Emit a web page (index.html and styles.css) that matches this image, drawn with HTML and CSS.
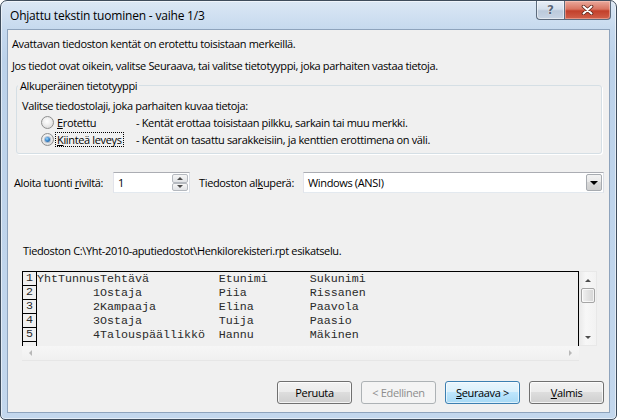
FILE: index.html
```html
<!DOCTYPE html>
<html lang="fi">
<head>
<meta charset="utf-8">
<title>Ohjattu tekstin tuominen - vaihe 1/3</title>
<link rel="stylesheet" href="styles.css">
</head>
<body>
<div class="window">
  <div class="titlebar">
    <span class="title">Ohjattu tekstin tuominen - vaihe 1/3</span>
    <div class="caption-btns">
      <div class="cap-btn help"><span class="help-glyph">?</span></div>
      <div class="cap-btn close">
        <svg width="13" height="10" viewBox="0 0 13 10">
          <path d="M2.5 1.5 L10.5 8.5 M10.5 1.5 L2.5 8.5" stroke="#5a2318" stroke-width="3.6" stroke-linecap="round" fill="none"/>
          <path d="M2.5 1.5 L10.5 8.5 M10.5 1.5 L2.5 8.5" stroke="#ffffff" stroke-width="2" stroke-linecap="round" fill="none"/>
        </svg>
      </div>
    </div>
  </div>
  <div class="client">
    <p class="line first">Avattavan tiedoston kentät on erotettu toisistaan merkeillä.</p>
    <p class="line second">Jos tiedot ovat oikein, valitse Seuraava, tai valitse tietotyyppi, joka parhaiten vastaa tietoja.</p>
    <fieldset class="group">
      <legend>Alkuperäinen tietotyyppi</legend>
      <div class="group-intro">Valitse tiedostolaji, joka parhaiten kuvaa tietoja:</div>
      <div class="options">
        <div class="opt"><span class="radio"></span><span class="opt-label"><u>E</u>rotettu</span></div>
        <div class="opt-desc">- Kentät erottaa toisistaan pilkku, sarkain tai muu merkki.</div>
        <div class="opt"><span class="radio checked"></span><span class="opt-label focus"><u>K</u>iinteä leveys</span></div>
        <div class="opt-desc">- Kentät on tasattu sarakkeisiin, ja kenttien erottimena on väli.</div>
      </div>
    </fieldset>
    <div class="import-row">
      <span class="lbl-start">Aloita tuonti <u>r</u>iviltä:</span>
      <div class="spinner">
        <span class="spin-val">1</span>
        <div class="spin-btns">
          <span class="spin-btn"><span class="tri-up"></span></span>
          <span class="spin-btn"><span class="tri-down"></span></span>
        </div>
      </div>
      <span class="lbl-origin">Tiedoston al<u>k</u>uperä:</span>
      <div class="combo">
        <span class="combo-val">Windows (ANSI)</span>
        <span class="combo-btn"><span class="tri-down dark"></span></span>
      </div>
    </div>
    <p class="preview-caption">Tiedoston C:\Yht-2010-aputiedostot\Henkilorekisteri.rpt esikatselu.</p>
    <div class="preview">
      <div class="preview-body">
        <div class="rownums">
          <div class="rn">1</div>
          <div class="rn">2</div>
          <div class="rn">3</div>
          <div class="rn">4</div>
          <div class="rn">5</div>
        </div>
        <div class="ptext">
          <div class="prow">YhtTunnusTehtävä          Etunimi      Sukunimi</div>
          <div class="prow">        1Ostaja           Piia         Rissanen</div>
          <div class="prow">        2Kampaaja         Elina        Paavola</div>
          <div class="prow">        3Ostaja           Tuija        Paasio</div>
          <div class="prow">        4Talouspäällikkö  Hannu        Mäkinen</div>
        </div>
      </div>
      <div class="vscroll">
        <span class="sb-arrow"><span class="tri-up"></span></span>
        <span class="thumb"></span>
        <span class="sb-fill"></span>
        <span class="sb-arrow"><span class="tri-down"></span></span>
      </div>
      <div class="hscroll">
        <span class="hsb-arrow"><span class="tri-left"></span></span>
        <span class="sb-fill"></span>
        <span class="hsb-arrow"><span class="tri-right"></span></span>
      </div>
      <div class="corner"></div>
    </div>
    <div class="buttons">
      <span class="btn">Peruuta</span>
      <span class="btn disabled">&lt; Edellinen</span>
      <span class="btn default"><u>S</u>euraava &gt;</span>
      <span class="btn"><u>V</u>almis</span>
    </div>
  </div>
</div>
</body>
</html>
```
FILE: styles.css
```css
* { box-sizing: border-box; }

body {
  margin: 0;
  font-family: "Open Sans", "Noto Sans", sans-serif;
  font-size: 11px;
  letter-spacing: -0.35px;
  color: #000;
  background: #ffffff;
}

.window {
  width: 617px;
  height: 420px;
  border: 1px solid #3e4c5c;
  border-radius: 7px 7px 5px 5px;
  background: linear-gradient(#dbe7f5 0px, #c6d9ee 28px, #bcd2ea 60px, #c3d7ed 100%);
  box-shadow: inset 0 0 0 1px rgba(255,255,255,0.55);
  display: flex;
  flex-direction: column;
  overflow: hidden;
}

.titlebar {
  height: 28px;
  display: flex;
  align-items: flex-start;
  flex: none;
}

.title {
  padding-left: 9px;
  line-height: 15px;
  margin-top: 7px;
  flex: 1;
  font-size: 12px;
  letter-spacing: -0.2px;
}

.caption-btns {
  display: flex;
  margin-right: 5px;
}

.cap-btn {
  height: 19px;
  display: flex;
  align-items: center;
  justify-content: center;
  border: 1px solid #5c6b7d;
  border-top: none;
}

.help {
  width: 28px;
  border-right: none;
  border-radius: 0 0 0 4px;
  background: linear-gradient(#e8eef6 0%, #d4dfec 45%, #bccadb 55%, #c8d5e4 100%);
  box-shadow: inset 0 0 0 1px rgba(255,255,255,0.5);
}

.help-glyph {
  font-family: "DejaVu Sans", sans-serif;
  font-weight: bold;
  font-size: 12px;
  letter-spacing: 0;
  color: #5a6778;
  text-shadow: 0 0 1px #fff, 0 0 1px #fff;
  line-height: 12px;
}

.close {
  width: 47px;
  border-radius: 0 0 4px 0;
  background: linear-gradient(#eaa99c 0%, #d97561 45%, #c2402b 55%, #d1604a 100%);
  box-shadow: inset 0 0 0 1px rgba(255,210,200,0.45);
}

.client {
  flex: 1;
  margin: 0 6px 6px 6px;
  border: 1px solid #8ea3bc;
  background: #f0f0f0;
  display: flex;
  flex-direction: column;
  padding-top: 6px;
}

.line {
  margin: 0 0 0 4px;
  line-height: 15px;
}

.line.second { margin-top: 7px; }

.group {
  margin: 5px 7px 0 8px;
  padding: 0 0 5px 0;
  border: 1px solid #d5dfe5;
  border-radius: 3px;
  box-shadow: 1px 1px 0 #ffffff;
  min-width: 0;
}

.group legend {
  padding: 0 2px;
  margin-left: 1px;
  line-height: 15px;
}

.group-intro {
  margin: 5px 0 0 5px;
  line-height: 15px;
}

.options {
  margin: 1px 0 0 24px;
  display: grid;
  grid-template-columns: 95px auto;
  grid-auto-rows: 17px;
  align-items: center;
}

.opt {
  display: flex;
  align-items: center;
}

.radio {
  width: 13px;
  height: 13px;
  border-radius: 50%;
  border: 1px solid #8e8f8f;
  background: radial-gradient(circle at 45% 40%, #ffffff 0%, #f1f1f1 35%, #d0d0d0 100%);
  position: relative;
  flex: none;
}

.radio.checked::after {
  content: "";
  position: absolute;
  left: 3px;
  top: 3px;
  width: 5px;
  height: 5px;
  border-radius: 50%;
  background: radial-gradient(circle at 40% 35%, #9fd8fb 0%, #3d8bd0 45%, #174d85 100%);
  box-shadow: 0 0 0 1px rgba(60,100,150,0.35);
}

.opt-label {
  margin-left: 1px;
  padding: 0 1px;
  border: 1px dotted transparent;
  line-height: 13px;
  height: 15px;
}

.opt-label.focus {
  border-color: #000;
}

.opt-desc {
  line-height: 15px;
}

.import-row {
  margin: 18px 5px 0 6px;
  height: 21px;
  display: flex;
  align-items: center;
}

.lbl-start {
  width: 99px;
  flex: none;
}

.spinner {
  width: 77px;
  height: 21px;
  flex: none;
  display: flex;
  align-items: center;
  background: #fff;
  border: 1px solid;
  border-color: #abadb3 #dbdfe6 #e3e9ef #e2e3ea;
  padding: 1px;
}

.spin-val {
  flex: 1;
  padding-left: 3px;
}

.spin-btns {
  width: 16px;
  height: 17px;
  display: flex;
  flex-direction: column;
}

.spin-btn {
  flex: 1;
  display: flex;
  align-items: center;
  justify-content: center;
  border: 1px solid #b5b9bf;
  background: linear-gradient(#f6f6f6, #e1e3e6);
  border-radius: 2px;
}

.lbl-origin {
  margin-left: 9px;
  width: 104px;
  flex: none;
}

.combo {
  flex: 1;
  height: 21px;
  display: flex;
  align-items: center;
  background: #fff;
  border: 1px solid;
  border-color: #abadb3 #dbdfe6 #e3e9ef #e2e3ea;
  padding: 1px;
}

.combo-val {
  flex: 1;
  padding-left: 3px;
}

.combo-btn {
  width: 16px;
  height: 17px;
  display: flex;
  align-items: center;
  justify-content: center;
  border: 1px solid #a7abb0;
  border-radius: 2px;
  background: linear-gradient(#f3f3f3 0%, #e8e8e8 50%, #d9d9d9 50%, #cfcfcf 100%);
}

.tri-up, .tri-down, .tri-left, .tri-right {
  width: 0;
  height: 0;
  display: block;
}

.tri-up {
  border-left: 3px solid transparent;
  border-right: 3px solid transparent;
  border-bottom: 3px solid #4d4d4d;
}

.tri-down {
  border-left: 3px solid transparent;
  border-right: 3px solid transparent;
  border-top: 3px solid #4d4d4d;
}

.tri-down.dark {
  border-left-width: 4px;
  border-right-width: 4px;
  border-top: 4px solid #000;
}

.tri-left {
  border-top: 3px solid transparent;
  border-bottom: 3px solid transparent;
  border-right: 3px solid #b8b8b8;
}

.tri-right {
  border-top: 3px solid transparent;
  border-bottom: 3px solid transparent;
  border-left: 3px solid #b8b8b8;
}

.preview-caption {
  margin: 50px 0 0 15px;
  line-height: 15px;
}

.preview {
  margin: 13px 0 0 14px;
  width: 575px;
  height: 90px;
  display: grid;
  grid-template-columns: 557px 18px;
  grid-template-rows: 75px 15px;
}

.preview-body {
  border: 1px solid #000;
  border-bottom: none;
  display: flex;
  overflow: hidden;
}

.rownums {
  width: 14px;
  border-right: 1px solid #000;
  flex: none;
}

.rn, .prow {
  height: 14px;
  line-height: 14px;
  font-family: "Liberation Mono", "Courier New", monospace;
  font-size: 11.67px;
  letter-spacing: 0;
  white-space: pre;
  color: #2a2a2a;
}

.rn {
  border-bottom: 1px solid #000;
  padding-left: 3px;
  line-height: 13px;
}

.vscroll {
  display: flex;
  flex-direction: column;
  align-items: center;
  border: 1px solid #e8e8e8;
  border-left: none;
  background: linear-gradient(to right, #e9e9e9, #f7f7f7 40%, #f2f2f2);
}

.sb-arrow {
  height: 16px;
  width: 100%;
  display: flex;
  align-items: center;
  justify-content: center;
  flex: none;
}

.thumb {
  width: 14px;
  height: 15px;
  flex: none;
  border: 1px solid #a5a5a5;
  border-radius: 2px;
  background: linear-gradient(to right, #f2f2f2, #e2e2e2 50%, #d6d6d6);
  box-shadow: inset 0 0 0 1px rgba(255,255,255,0.7);
}

.sb-fill { flex: 1; }

.hscroll {
  display: flex;
  align-items: center;
  border-bottom: 1px solid #e6e6e6;
  background: linear-gradient(#f6f6f6, #f0f0f0);
}

.hsb-arrow {
  width: 17px;
  height: 100%;
  display: flex;
  align-items: center;
  justify-content: center;
}

.corner { background: #f0f0f0; }

.buttons {
  margin-top: 20px;
  padding-right: 5px;
  display: flex;
  justify-content: flex-end;
  gap: 9px;
}

.btn {
  width: 75px;
  height: 23px;
  display: flex;
  align-items: center;
  justify-content: center;
  border: 1px solid #707070;
  border-radius: 3px;
  background: linear-gradient(#f2f2f2 0%, #ebebeb 50%, #dddddd 50%, #cfcfcf 100%);
  box-shadow: inset 0 0 0 1px rgba(255,255,255,0.75);
}

.btn.disabled {
  border-color: #adb2b5;
  background: #f4f4f4;
  color: #8d8d8d;
  box-shadow: none;
}

.btn.default {
  border-color: #3c7fb1;
  background: linear-gradient(#eaf6fd 0%, #d9f0fc 50%, #bee6fd 50%, #a7d9f5 100%);
  box-shadow: inset 0 0 0 1px rgba(255,255,255,0.6);
}
```
